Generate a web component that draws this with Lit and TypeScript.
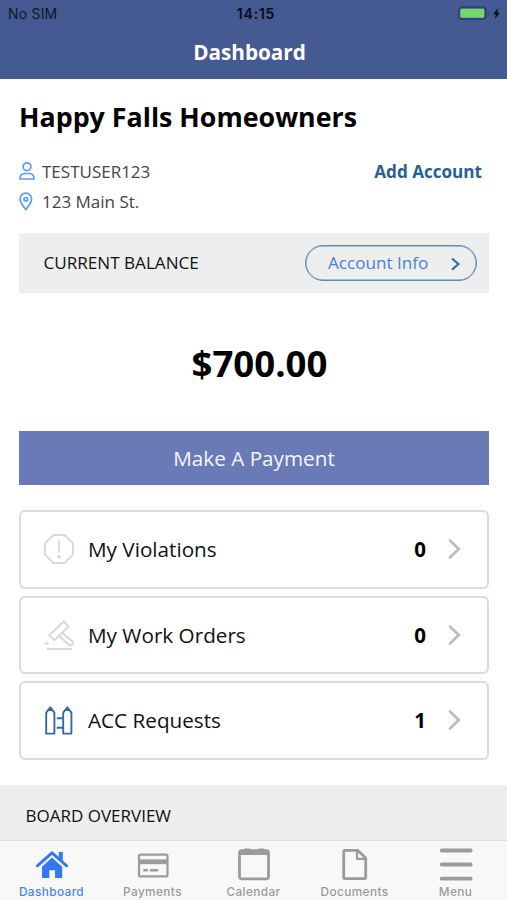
import { LitElement, html, css, svg } from "lit";
import { customElement, property } from "lit/decorators.js";

const icons: Record<string, unknown> = {
  violation: svg`<svg width="32" height="32" viewBox="0 0 32 32" fill="none" stroke="#d8d8d8" stroke-width="1.8" stroke-linejoin="round" stroke-linecap="round">
    <path d="M10.4 2h11.2L30 10.4v11.2L21.6 30H10.4L2 21.6V10.4Z"/><path d="M16 8.5v10.2"/><circle cx="16" cy="23.7" r="1" fill="#d8d8d8"/></svg>`,
  gavel: svg`<svg width="32" height="32" viewBox="0 0 32 32" fill="none" stroke="#d8d8d8" stroke-width="1.9" stroke-linejoin="round" stroke-linecap="round">
    <path d="M20.7 2.5L25.6 7.4 11.3 21.2 6.2 16.2Z"/><path d="M19.6 14.2L29.5 22.5Q30.5 25 28.3 26.2 27 26.8 25.600 25.5L16.8 17.5"/><path d="M2.4 24.5H5M4.5 30H28.3"/></svg>`,
  fence: svg`<svg width="32" height="32" viewBox="0 0 32 32" fill="none" stroke="#356c9f" stroke-width="1.9" stroke-linejoin="round">
    <path d="M3.2 8.6L7.3 3.2 11.4 8.6V29.6H3.2ZM20.2 8.600L24.3 3.2 28.4 8.6V29.6H20.2ZM13.8 14.2H20.2M13.8 23.7H20.2"/><path d="M4.8 7L7.3 3.7 9.800 7ZM21.8 7L24.3 3.7 26.8 7Z" fill="#356c9f" stroke="none"/></svg>`,
  home: svg`<svg width="36" height="36" viewBox="0 0 36 36" fill="#3478f0">
    <path d="M18 11.5L28.2 20.8V31.3Q28.2 32 27.5 32H21V24.3H15.3V32H8.8Q8 32 8 31.3V20.8Z"/><path d="M24.8 6h4v9l-4-3.600z"/><path d="M3.3 19.8L18 6.8 32.7 19.8" fill="none" stroke="#3478f0" stroke-width="2.9" stroke-linecap="round" stroke-linejoin="round"/></svg>`,
  card: svg`<svg width="36" height="36" viewBox="0 0 36 36" fill="none" stroke="#9b9b9b" stroke-width="2.2">
    <rect x="4" y="8.600" width="28.5" height="21.8" rx="1.5"/><path d="M4 15.8h28.5" stroke-width="4.8"/><path d="M8.3 24.3h4.5M14.8 24.3h8.5" stroke-width="2.4"/></svg>`,
  calendar: svg`<svg width="36" height="36" viewBox="0 0 36 36" fill="none" stroke="#9b9b9b" stroke-width="2.8">
    <rect x="3.500" y="4.600" width="29" height="28.2" rx="2"/><path d="M3.500 6.500h29" stroke-width="5"/><path d="M9 4.400h4M23 4.400h4" stroke-width="3.6" stroke-linecap="round"/></svg>`,
  document: svg`<svg width="36" height="36" viewBox="0 0 36 36" fill="none" stroke="#9b9b9b" stroke-width="2.8" stroke-linejoin="round">
    <path d="M8 4.300H20.500L28.700 12V31.200Q28.700 32.600 27.200 32.600H8Q6.700 32.600 6.700 31.200V5.700Q6.700 4.300 8 4.300Z"/><path d="M20 4.500V12.800H28.500" stroke-width="2.2"/></svg>`,
  menu: svg`<svg width="36" height="36" viewBox="0 0 36 36" fill="none" stroke="#9b9b9b" stroke-width="3.8" stroke-linecap="round">
    <path d="M3.7 4.500H32.7M3.7 18.500H32.7M3.7 32.700H32.7"/></svg>`,
};

@customElement("summary-row")
class SummaryRow extends LitElement {
  @property() icon = "";
  @property() label = "";
  @property() count = "";
  static styles = css`
    :host { display: flex; align-items: center; box-sizing: border-box; height: 78.5px; padding: 0 25px 0 22px;
      border: 2px solid #dcdcdc; border-radius: 6px; background: #fff; color: #111; white-space: nowrap; }
    .icon { display: flex; width: 32px; margin-right: 13px; }
    .label { flex: 1; font-size: 20.7px; }
    .count { width: 16px; text-align: center; font-size: 20.5px; font-weight: 700; color: #000; margin-right: 18px; }
    .chevron { display: block; }
  `;
  render() {
    return html`<span class="icon">${icons[this.icon]}</span><span class="label">${this.label}</span><span class="count">${this.count}</span>
      <svg class="chevron" width="16" height="24" viewBox="0 0 16 24" fill="none" stroke="#bdbdbd" stroke-width="2.8" stroke-linecap="round"><path d="M4 3.500L12.8 12 4 20.500"/></svg>`;
  }
}

@customElement("tab-item")
class TabItem extends LitElement {
  @property() icon = "";
  @property() label = "";
  @property({ type: Boolean, reflect: true }) active = false;
  static styles = css`
    :host { display: flex; flex-direction: column; align-items: center; width: 101px; color: #999; font: 500 11.8px/14px Inter, sans-serif; letter-spacing: 0.4px; }
    :host([active]) { color: #4686ee; }
    .icon { display: flex; height: 36px; margin: 5px 0 3px; }
  `;
  render() {
    return html`<span class="icon">${icons[this.icon]}</span><span>${this.label}</span>`;
  }
}

@customElement("app-root")
class AppRoot extends LitElement {
  static styles = css`
    :host { display: flex; flex-direction: column; width: 507px; height: 900px; overflow: hidden; background: #fff; color: #000;
      font-family: "Open Sans", sans-serif; white-space: nowrap; }
    .top { height: 79px; background: #455992; flex: none; }
    .status { display: grid; grid-template-columns: 1fr auto 1fr; align-items: center; height: 27px; padding: 0 3px 0 8px;
      font: 400 14px/27px Inter, sans-serif; color: #101728; }
    .carrier { letter-spacing: 0.2px; }
    .clock { font-weight: 600; letter-spacing: 0.8px; color: #080c16; }
    .power { display: flex; justify-content: flex-end; }
    .title { text-align: center; color: #fff; font-size: 20.7px; font-weight: 700; line-height: 50px; padding-right: 8px; }
    .content { flex: 1; padding: 19.5px 18px 0 19px; min-height: 0; }
    h1 { margin: 0; font-size: 26.8px; line-height: 36px; font-weight: 700; }
    .who { display: flex; justify-content: space-between; padding: 22px 7px 0 0; }
    .line { display: flex; align-items: center; height: 30px; font-size: 17px; color: #444; }
    .line svg { margin: -2px 7px 0 0; }
    .add { font-size: 17.1px; line-height: 30px; font-weight: 700; color: #276096; }
    .balance { display: flex; align-items: center; justify-content: space-between; height: 60px; margin-top: 16px;
      padding: 0 12px 0 24.5px; background: #eee; font-size: 17.1px; color: #111; }
    .pill { display: flex; align-items: center; box-sizing: border-box; width: 172px; height: 36px; padding: 0 14px 0 22px; justify-content: space-between;
      border: 1px solid #5e8db6; box-shadow: inset 0 0 0 0.5px #5e8db6; border-radius: 18px; color: #4a80d6; font-size: 17.1px; }
    .amount { text-align: center; font-size: 36.6px; line-height: 50px; font-weight: 700; margin-top: 45px; padding-left: 11px; }
    .pay { height: 54px; margin-top: 43px; background: #6a7ab7; color: #f4f6ff; text-align: center; font-size: 20.7px; line-height: 54px; }
    .rows { display: flex; flex-direction: column; gap: 7px; margin-top: 25.5px; }
    .overview { flex: none; height: 55.5px; padding-left: 25.5px; line-height: 61px; background: #eee; font-size: 17px; color: #111; }
    .tabs { flex: none; display: flex; height: 60px; padding-left: 1px; box-sizing: border-box; border-top: 1px solid #dfdfdf; background: #f8f8f8; }
  `;
  render() {
    return html`
      <div class="top">
        <div class="status"><span class="carrier">No SIM</span><span class="clock">14:15</span>
          <span class="power"><svg width="46" height="16" viewBox="0 0 46 16"><rect x=".8" y="1.2" width="27" height="12" rx="3" fill="none" stroke="#263c62" stroke-width="1.3"/><rect x="2.3" y="2.7" width="24" height="9" rx="1.5" fill="#74d66d"/><path d="M30 5.500q2 2 0 4z" fill="#263c62"/><path d="M40.3 2L34.9 8.200H38L36.7 13 42 6.800H39Z" fill="#080c16"/></svg></span>
        </div>
        <div class="title">Dashboard</div>
      </div>
      <div class="content">
        <h1>Happy Falls Homeowners</h1>
        <div class="who">
          <div>
            <div class="line"><svg width="16" height="20" viewBox="0 0 16 20" fill="none" stroke="#5b9aff" stroke-width="1.7" stroke-linejoin="round"><circle cx="8" cy="5.7" r="3.9"/><path d="M1 18Q1 12.500 5.8 12.500H10.200Q15 12.500 15 18Z"/></svg>TESTUSER123</div>
            <div class="line"><svg width="16" height="20" viewBox="0 0 16 20" fill="none" stroke="#5b9aff" stroke-width="1.7" stroke-linejoin="round"><path d="M6.8 18.500Q1 11.500 1 8A5.800 5.800 0 0 1 12.600 8Q12.600 11.500 6.8 18.500Z"/><circle cx="6.8" cy="8.3" r="1.8"/></svg>123 Main St.</div>
          </div>
          <div class="add">Add Account</div>
        </div>
        <div class="balance"><span>CURRENT BALANCE</span>
          <span class="pill">Account Info<svg width="12" height="16" viewBox="0 0 12 16" fill="none" stroke="#3d6f9b" stroke-width="2.2"><path d="M2 3.500L8.500 9.100 2 14.700"/></svg></span>
        </div>
        <div class="amount">$700.00</div>
        <div class="pay">Make A Payment</div>
        <div class="rows">
          <summary-row icon="violation" label="My Violations" count="0"></summary-row>
          <summary-row icon="gavel" label="My Work Orders" count="0"></summary-row>
          <summary-row icon="fence" label="ACC Requests" count="1"></summary-row>
        </div>
      </div>
      <div class="overview">BOARD OVERVIEW</div>
      <div class="tabs">
        <tab-item icon="home" label="Dashboard" active></tab-item>
        <tab-item icon="card" label="Payments"></tab-item>
        <tab-item icon="calendar" label="Calendar"></tab-item>
        <tab-item icon="document" label="Documents"></tab-item>
        <tab-item icon="menu" label="Menu"></tab-item>
      </div>`;
  }
}
